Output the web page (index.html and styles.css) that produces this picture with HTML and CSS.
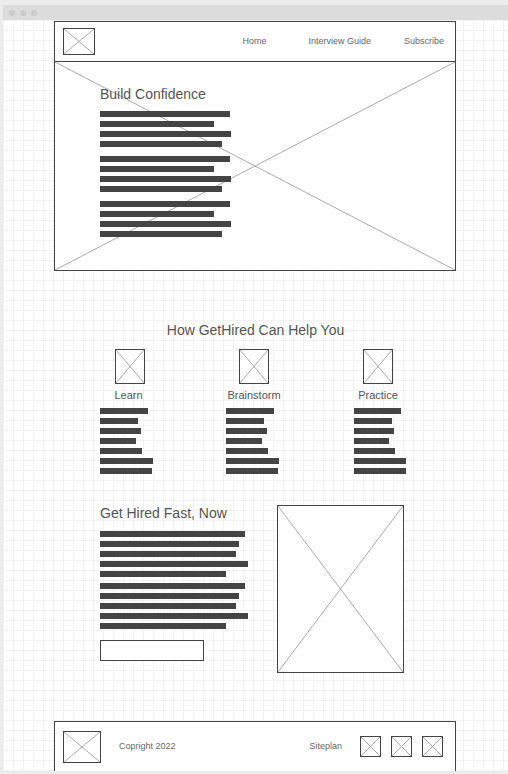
FILE: index.html
```html
<!DOCTYPE html>
<html lang="en">
<head>
    <meta charset="UTF-8">
    <meta name="viewport" content="width=device-width, initial-scale=1.0">
    <title>GetHired Wireframe</title>
    <link rel="stylesheet" href="styles.css">
</head>
<body>
    <div class="window">
        <div class="titlebar">
            <span class="dot"></span><span class="dot"></span><span class="dot"></span>
        </div>
        <div class="canvas">
            <div class="page">
                <!-- header -->
                <header class="header">
                    <div class="ph logo">
                        <svg class="x" viewBox="0 0 100 100" preserveAspectRatio="none"><line x1="0" y1="0" x2="100" y2="100"/><line x1="100" y1="0" x2="0" y2="100"/></svg>
                    </div>
                    <nav class="nav">
                        <a href="#">Home</a>
                        <a href="#">Interview Guide</a>
                        <a href="#">Subscribe</a>
                    </nav>
                </header>

                <!-- hero -->
                <section class="hero">
                    <svg class="x" viewBox="0 0 100 100" preserveAspectRatio="none"><line x1="0" y1="0" x2="100" y2="100"/><line x1="100" y1="0" x2="0" y2="100"/></svg>
                    <div class="hero-content">
                        <h1 class="title">Build Confidence</h1>
                        <div class="lines">
                            <div class="bar" style="width:130px"></div>
                            <div class="bar" style="width:114px"></div>
                            <div class="bar" style="width:131px"></div>
                            <div class="bar" style="width:122px"></div>
                        </div>
                        <div class="lines">
                            <div class="bar" style="width:130px"></div>
                            <div class="bar" style="width:114px"></div>
                            <div class="bar" style="width:131px"></div>
                            <div class="bar" style="width:122px"></div>
                        </div>
                        <div class="lines">
                            <div class="bar" style="width:130px"></div>
                            <div class="bar" style="width:114px"></div>
                            <div class="bar" style="width:131px"></div>
                            <div class="bar" style="width:122px"></div>
                        </div>
                    </div>
                </section>

                <!-- features -->
                <section class="help">
                    <h2 class="title center">How GetHired Can Help You</h2>
                    <div class="features">
                        <div class="feature learn">
                            <div class="ph icon">
                                <svg class="x" viewBox="0 0 100 100" preserveAspectRatio="none"><line x1="0" y1="0" x2="100" y2="100"/><line x1="100" y1="0" x2="0" y2="100"/></svg>
                            </div>
                            <div class="label">Learn</div>
                            <div class="lines">
                                <div class="bar" style="width:48px"></div>
                                <div class="bar" style="width:38px"></div>
                                <div class="bar" style="width:41px"></div>
                                <div class="bar" style="width:36px"></div>
                                <div class="bar" style="width:42px"></div>
                                <div class="bar" style="width:53px"></div>
                                <div class="bar" style="width:52px"></div>
                            </div>
                        </div>
                        <div class="feature brainstorm">
                            <div class="ph icon">
                                <svg class="x" viewBox="0 0 100 100" preserveAspectRatio="none"><line x1="0" y1="0" x2="100" y2="100"/><line x1="100" y1="0" x2="0" y2="100"/></svg>
                            </div>
                            <div class="label">Brainstorm</div>
                            <div class="lines">
                                <div class="bar" style="width:48px"></div>
                                <div class="bar" style="width:38px"></div>
                                <div class="bar" style="width:41px"></div>
                                <div class="bar" style="width:36px"></div>
                                <div class="bar" style="width:42px"></div>
                                <div class="bar" style="width:53px"></div>
                                <div class="bar" style="width:52px"></div>
                            </div>
                        </div>
                        <div class="feature practice">
                            <div class="ph icon">
                                <svg class="x" viewBox="0 0 100 100" preserveAspectRatio="none"><line x1="0" y1="0" x2="100" y2="100"/><line x1="100" y1="0" x2="0" y2="100"/></svg>
                            </div>
                            <div class="label">Practice</div>
                            <div class="lines">
                                <div class="bar" style="width:47px"></div>
                                <div class="bar" style="width:38px"></div>
                                <div class="bar" style="width:40px"></div>
                                <div class="bar" style="width:35px"></div>
                                <div class="bar" style="width:41px"></div>
                                <div class="bar" style="width:52px"></div>
                                <div class="bar" style="width:52px"></div>
                            </div>
                        </div>
                    </div>
                </section>

                <!-- get hired -->
                <section class="promo">
                    <div class="promo-text">
                        <h2 class="title">Get Hired Fast, Now</h2>
                        <div class="lines tall">
                            <div class="bar" style="width:145px"></div>
                            <div class="bar" style="width:139px"></div>
                            <div class="bar" style="width:136px"></div>
                            <div class="bar" style="width:148px"></div>
                            <div class="bar" style="width:126px"></div>
                        </div>
                        <div class="lines tall">
                            <div class="bar" style="width:145px"></div>
                            <div class="bar" style="width:139px"></div>
                            <div class="bar" style="width:136px"></div>
                            <div class="bar" style="width:148px"></div>
                            <div class="bar" style="width:126px"></div>
                        </div>
                        <div class="button"></div>
                    </div>
                    <div class="ph picture">
                        <svg class="x" viewBox="0 0 100 100" preserveAspectRatio="none"><line x1="0" y1="0" x2="100" y2="100"/><line x1="100" y1="0" x2="0" y2="100"/></svg>
                    </div>
                </section>

                <!-- footer -->
                <footer class="footer">
                    <div class="ph footer-logo">
                        <svg class="x" viewBox="0 0 100 100" preserveAspectRatio="none"><line x1="0" y1="0" x2="100" y2="100"/><line x1="100" y1="0" x2="0" y2="100"/></svg>
                    </div>
                    <span class="copyright">Copright 2022</span>
                    <span class="siteplan">Siteplan</span>
                    <div class="social">
                        <div class="ph social-icon">
                            <svg class="x" viewBox="0 0 100 100" preserveAspectRatio="none"><line x1="0" y1="0" x2="100" y2="100"/><line x1="100" y1="0" x2="0" y2="100"/></svg>
                        </div>
                        <div class="ph social-icon">
                            <svg class="x" viewBox="0 0 100 100" preserveAspectRatio="none"><line x1="0" y1="0" x2="100" y2="100"/><line x1="100" y1="0" x2="0" y2="100"/></svg>
                        </div>
                        <div class="ph social-icon">
                            <svg class="x" viewBox="0 0 100 100" preserveAspectRatio="none"><line x1="0" y1="0" x2="100" y2="100"/><line x1="100" y1="0" x2="0" y2="100"/></svg>
                        </div>
                    </div>
                </footer>
            </div>
        </div>
    </div>
</body>
</html>
```

FILE: styles.css
```css
body {
    margin: 0;
    background-color: #ececec;
    font-family: "Liberation Sans", Arial, sans-serif;
    color: #555;
    overflow: hidden;
}
.window {
    margin: 5px 0 0 3px;
    width: 505px;
    height: 766px;
}
.titlebar {
    height: 15px;
    background-color: #dcdcdc;
    display: flex;
    align-items: center;
    gap: 5px;
    padding-left: 6px;
}
.dot {
    width: 6px;
    height: 6px;
    border-radius: 50%;
    background-color: #cbcbcb;
}
.canvas {
    height: 751px;
    background-color: #fff;
    background-image:
        linear-gradient(to right, #f2f2f2 1px, transparent 1px),
        linear-gradient(to bottom, #f2f2f2 1px, transparent 1px);
    background-size: 10px 10px;
}
.page {
    width: 402px;
    margin-left: 51px;
    padding-top: 1px;
    display: flex;
    flex-direction: column;
}

/* placeholders */
.ph {
    position: relative;
    box-sizing: border-box;
    border: 1px solid #444;
    background-color: #fff;
}
.x {
    position: absolute;
    top: 0;
    left: 0;
    width: 100%;
    height: 100%;
}
.x line {
    stroke: #aaa;
    stroke-width: 1;
    vector-effect: non-scaling-stroke;
}

/* text bars */
.lines {
    display: flex;
    flex-direction: column;
    gap: 4px;
}
.bar {
    height: 6px;
    background-color: #444;
}
.title {
    margin: 0;
    font-size: 14px;
    font-weight: normal;
    line-height: 16px;
    color: #555;
}
.center {
    text-align: center;
}

/* header */
.header {
    box-sizing: border-box;
    height: 41px;
    border: 1px solid #444;
    background-color: #fff;
    display: flex;
    align-items: center;
    padding: 0 11px 0 8px;
}
.logo {
    width: 32px;
    height: 27px;
}
.nav {
    margin-left: auto;
    margin-bottom: 2px;
    display: flex;
    font-size: 9px;
}
.nav a {
    color: #666;
    text-decoration: none;
}
.nav a:nth-child(2) {
    margin-left: 42px;
}
.nav a:nth-child(3) {
    margin-left: 33px;
}

/* hero */
.hero {
    position: relative;
    box-sizing: border-box;
    height: 209px;
    border: 1px solid #444;
    border-top: none;
    background-color: #fff;
}
.hero-content {
    position: relative;
    padding: 25px 0 0 45px;
    display: flex;
    flex-direction: column;
    gap: 9px;
}
.hero-content .title {
    line-height: 15px;
}

/* features */
.help {
    margin-top: 51px;
    padding-left: 1px;
}
.features {
    display: flex;
    margin-top: 11px;
}
.feature {
    display: flex;
    flex-direction: column;
    align-items: center;
}
.feature .lines {
    align-self: flex-start;
    margin-top: 6px;
}
.learn {
    width: 60px;
    margin-left: 45px;
}
.brainstorm {
    width: 56px;
    margin-left: 66px;
}
.practice {
    width: 48px;
    margin-left: 72px;
}
.icon {
    width: 30px;
    height: 35px;
}
.label {
    margin-top: 5px;
    font-size: 11px;
    line-height: 13px;
    white-space: nowrap;
}
.learn .label {
    margin-right: 3px;
}

/* promo */
.promo {
    margin-top: 31px;
    display: flex;
    align-items: flex-start;
}
.promo-text {
    width: 177px;
    padding-left: 46px;
    display: flex;
    flex-direction: column;
}
.promo-text .title {
    margin-bottom: 10px;
}
.lines.tall + .lines.tall {
    margin-top: 6px;
}
.button {
    box-sizing: border-box;
    width: 104px;
    height: 21px;
    margin-top: 11px;
    border: 1px solid #444;
    background-color: #fff;
}
.picture {
    width: 127px;
    height: 168px;
}

/* footer */
.footer {
    box-sizing: border-box;
    height: 51px;
    margin-top: 48px;
    border: 1px solid #444;
    background-color: #fff;
    display: flex;
    align-items: center;
    padding: 0 12px 0 8px;
    font-size: 9px;
    color: #666;
}
.footer-logo {
    width: 38px;
    height: 32px;
}
.copyright {
    margin-left: 18px;
    margin-bottom: 2px;
}
.siteplan {
    margin-left: auto;
    margin-bottom: 2px;
}
.social {
    display: flex;
    gap: 10px;
    margin-left: 18px;
}
.social-icon {
    width: 21px;
    height: 21px;
}
```
